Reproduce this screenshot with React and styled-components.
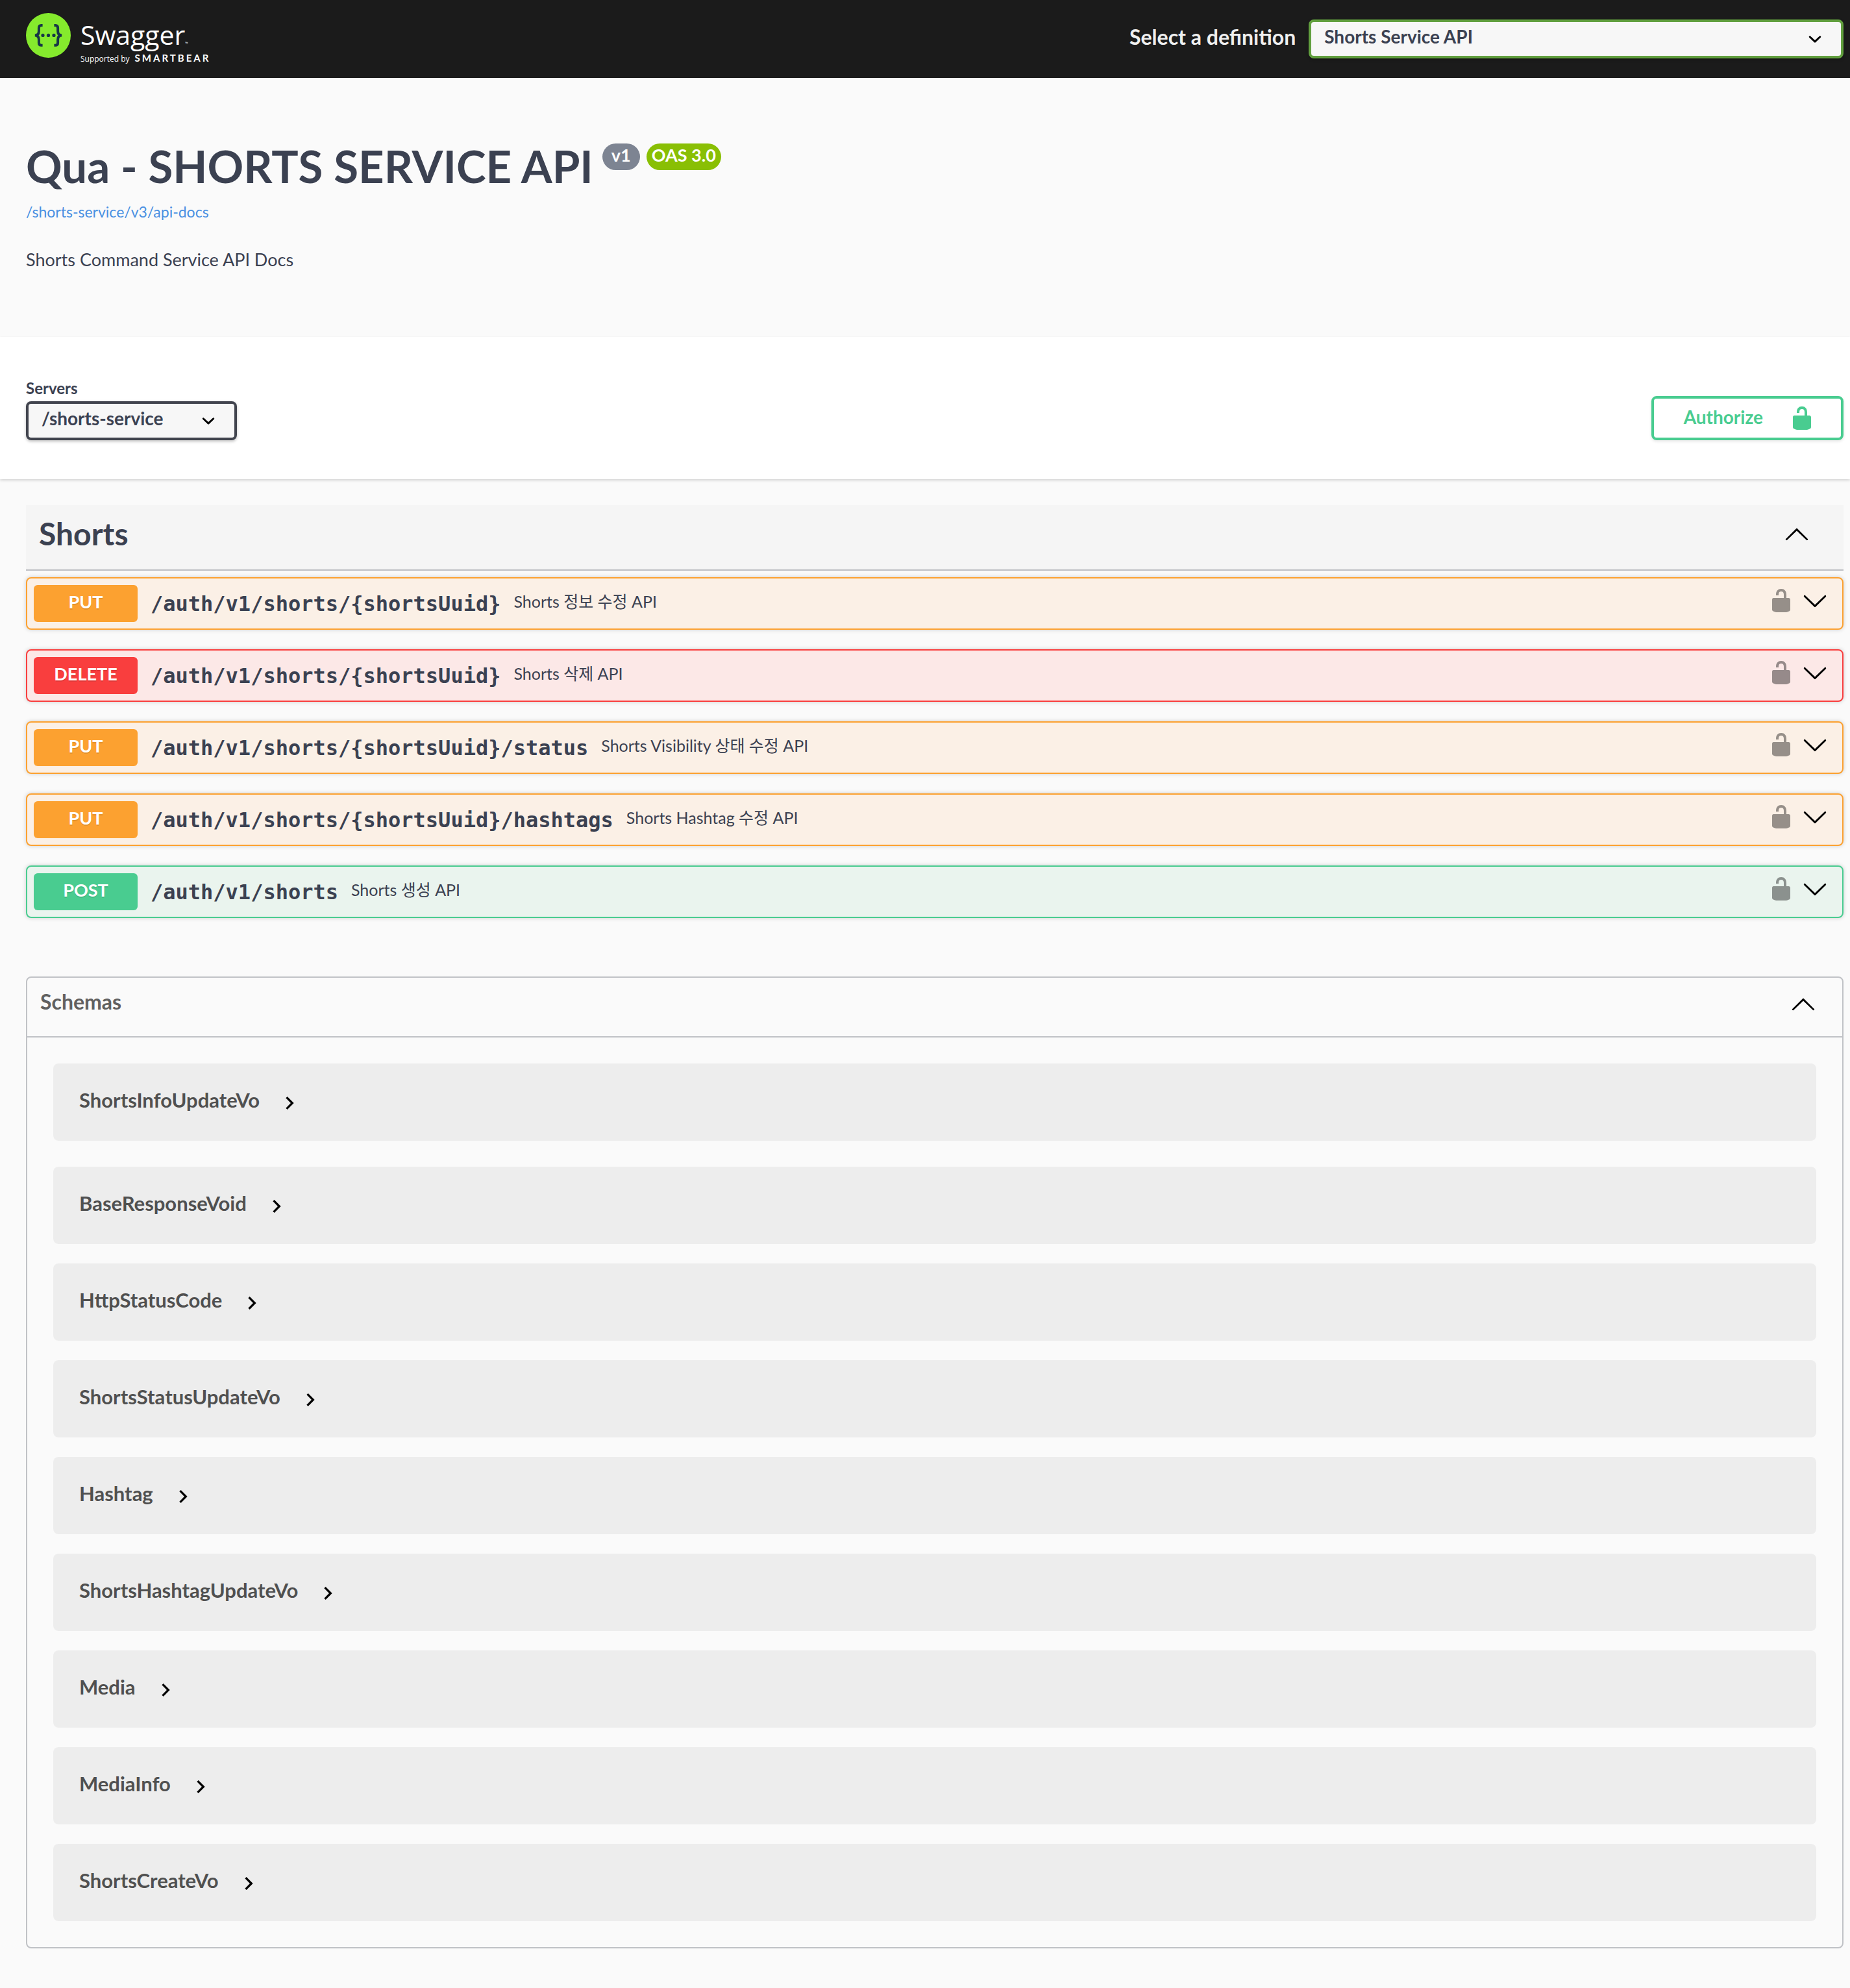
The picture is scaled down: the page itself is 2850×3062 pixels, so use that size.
import React from "react";
import styled, { createGlobalStyle } from "styled-components";

const sans = `Lato, "Noto Sans CJK KR", sans-serif`;
const mono = `"DejaVu Sans Mono", monospace`;
const ink = "#3b4151";
const line = "rgba(59, 65, 81, 0.3)";

const GlobalStyle = createGlobalStyle`
  *, *::before, *::after { box-sizing: border-box; }
  body {
    margin: 0;
    background: #fafafa;
    color: ${ink};
    font-family: ${sans};
  }
  h1, h2, p { margin: 0; }
  button, select { font-family: inherit; color: inherit; margin: 0; }
`;

/* ---------- icons ---------- */

const Svg = styled.svg`
  display: block;
  flex: none;
  width: 40px;
  height: 40px;
`;

const ChevronUp = () => (
  <Svg viewBox="0 0 20 20" aria-hidden="true">
    <path d="M17.418 14.908c.272.268.709.268.979 0s.271-.701 0-.969l-7.908-7.83c-.27-.268-.707-.268-.979 0l-7.908 7.83c-.27.268-.27.701 0 .969.271.268.709.268.979 0L10 7.767l7.418 7.141z" />
  </Svg>
);

const ChevronDown = () => (
  <Svg viewBox="0 0 20 20" aria-hidden="true">
    <path d="M17.418 6.109c.272-.268.709-.268.979 0s.271.701 0 .969l-7.908 7.83c-.27.268-.707.268-.979 0l-7.908-7.83c-.27-.268-.27-.701 0-.969.271-.268.709-.268.979 0L10 13.25l7.418-7.141z" />
  </Svg>
);

const ChevronRight = () => (
  <Svg viewBox="0 0 24 24" aria-hidden="true">
    <path d="M10 6L8.59 7.41 13.17 12l-4.58 4.59L10 18l6-6z" />
  </Svg>
);

const Unlocked = () => (
  <Svg viewBox="0 0 20 20" fill="currentColor" aria-hidden="true">
    <path d="M15.8 8H14V5.6C14 2.703 12.665 1 10 1 7.334 1 6 2.703 6 5.6V6h2v-.801C8 3.754 8.797 3 10 3c1.203 0 2 .754 2 2.199V8H4c-.553 0-1 .646-1 1.199V17c0 .549.428 1.139.951 1.307l1.197.387C5.672 18.861 6.55 19 7.1 19h5.8c.549 0 1.428-.139 1.951-.307l1.196-.387c.524-.167.953-.757.953-1.306V9.199C17 8.646 16.352 8 15.8 8z" />
  </Svg>
);

/* ---------- select ---------- */

const SelectBox = styled.div`
  position: relative;
  flex: ${(p) => (p.$fill ? "1" : "none")};
  width: ${(p) => (p.$fill ? "auto" : "325px")};
`;

const NativeSelect = styled.select`
  display: block;
  width: 100%;
  height: 60px;
  padding: 0 80px 8px 20px;
  appearance: none;
  border: 4px solid ${(p) => p.$border};
  border-radius: 8px;
  background: #f7f7f7;
  box-shadow: 0 2px 4px rgba(0, 0, 0, 0.25);
  color: ${ink};
  font-size: 28px;
  font-weight: 700;
`;

const SelectArrow = styled(Svg)`
  position: absolute;
  top: 10px;
  right: 24px;
  pointer-events: none;
`;

function Select({ id, border, fill, option }) {
  return (
    <SelectBox $fill={fill}>
      <NativeSelect id={id} $border={border}>
        <option>{option}</option>
      </NativeSelect>
      <SelectArrow viewBox="0 0 20 20" aria-hidden="true">
        <path d="M13.418 7.859a.695.695 0 01.978 0 .68.68 0 010 .969l-3.908 3.83a.697.697 0 01-.979 0l-3.908-3.83a.68.68 0 010-.969.695.695 0 01.978 0L10 11l3.418-3.141z" />
      </SelectArrow>
    </SelectBox>
  );
}

/* ---------- top bar ---------- */

const TopBar = styled.header`
  display: flex;
  justify-content: space-between;
  height: 120px;
  padding: 0 10px 0 40px;
  background: #1b1b1b;
`;

const LogoLink = styled.a`
  display: flex;
  gap: 15px;
  padding-top: 20px;
  color: #fff;
  text-decoration: none;
`;

const LogoMark = styled.svg`
  display: block;
  width: 69px;
  height: 69px;
`;

const LogoText = styled.div`
  padding-top: 9px;
  font-family: "Open Sans", sans-serif;
`;

const Wordmark = styled.div`
  display: flex;
  align-items: baseline;
  font-size: 41px;
  line-height: 48px;
`;

const TradeMark = styled.span`
  font-size: 6px;
  line-height: 8px;
`;

const Byline = styled.div`
  display: flex;
  align-items: baseline;
  gap: 8px;
  font-size: 12px;
  line-height: 24px;
`;

const Company = styled.span`
  font-family: ${sans};
  font-size: 15px;
  font-weight: 700;
  letter-spacing: 3px;
`;

const DefinitionPicker = styled.div`
  display: flex;
  align-items: center;
  gap: 20px;
  width: 100%;
  max-width: 1100px;
`;

const DefinitionLabel = styled.label`
  padding-bottom: 8px;
  color: #f0f0f0;
  font-size: 32px;
  font-weight: 700;
  white-space: nowrap;
`;

/* ---------- info ---------- */

const Info = styled.section`
  padding: 96px 10px 103px 40px;
`;

const TitleRow = styled.div`
  display: flex;
  align-items: flex-start;
  gap: 10px;
`;

const Title = styled.h1`
  padding-right: 4px;
  font-size: 69px;
  font-weight: 700;
  line-height: 80px;
`;

const Badge = styled.span`
  margin-top: 5px;
  padding: 0 ${(p) => (p.$wide ? "14px" : "8px")} 6px;
  border-radius: 21px;
  background: ${(p) => p.$color};
  color: #fff;
  font-size: 27px;
  font-weight: 700;
  line-height: 35px;
`;

const SpecLink = styled.a`
  display: block;
  width: fit-content;
  margin-top: 15px;
  color: #4990e2;
  font-size: 23px;
  line-height: 30px;
  text-decoration: none;
`;

const Description = styled.p`
  margin-top: 43px;
  font-size: 27px;
  line-height: 32px;
`;

/* ---------- servers ---------- */

const Scheme = styled.section`
  display: flex;
  align-items: flex-end;
  justify-content: space-between;
  padding: 65px 10px 60px 40px;
  background: #fff;
  box-shadow: 0 2px 4px rgba(0, 0, 0, 0.15);
`;

const ServerLabel = styled.label`
  display: block;
  margin-bottom: 6px;
  font-size: 24px;
  font-weight: 700;
  line-height: 28px;
`;

const AuthorizeButton = styled.button`
  display: flex;
  align-items: center;
  gap: 40px;
  height: 68px;
  padding: 0 40px 0 46px;
  border: 4px solid #49cc90;
  border-radius: 8px;
  background: transparent;
  box-shadow: 0 2px 4px rgba(0, 0, 0, 0.1);
  color: #49cc90;
  font-size: 28px;
  font-weight: 700;
`;

const AuthorizeText = styled.span`
  padding-bottom: 4px;
`;

/* ---------- operations ---------- */

const Content = styled.main`
  padding: 40px 10px 61px 40px;
`;

const IconButton = styled.button`
  display: block;
  padding: 0;
  border: 0;
  background: none;
  color: #000;
  opacity: ${(p) => (p.$faded ? 0.4 : 1)};
`;

const TagHeader = styled.div`
  display: flex;
  align-items: center;
  justify-content: space-between;
  height: 101px;
  margin-bottom: 10px;
  padding: 0 52px 12px 20px;
  border-bottom: 2px solid ${line};
  background: rgba(0, 0, 0, 0.02);
`;

const TagTitle = styled.h2`
  font-size: 48px;
  font-weight: 700;
`;

const Operations = styled.div`
  display: flex;
  flex-direction: column;
  gap: 30px;
`;

const Operation = styled.div`
  display: flex;
  align-items: center;
  gap: 20px;
  padding: 10px 22px 10px 10px;
  border: 2px solid ${(p) => p.$tone.strong};
  border-radius: 8px;
  background: ${(p) => p.$tone.soft};
  box-shadow: 0 0 6px rgba(0, 0, 0, 0.19);
`;

const Method = styled.span`
  width: 160px;
  padding: 9px 0 15px;
  border-radius: 6px;
  background: ${(p) => p.$tone.strong};
  color: #fff;
  font-size: 27px;
  font-weight: 700;
  line-height: 33px;
  text-align: center;
  text-shadow: 0 2px 0 rgba(0, 0, 0, 0.1);
`;

const Path = styled.a`
  color: ${ink};
  font-family: ${mono};
  font-size: 32px;
  font-weight: 700;
  text-decoration: none;
`;

const Summary = styled.span`
  flex: 1;
  padding-bottom: 8px;
  font-size: 25px;
  line-height: 36px;
`;

const Controls = styled.div`
  display: flex;
  gap: 12px;
  padding-bottom: 10px;
`;

/* ---------- schemas ---------- */

const Schemas = styled.section`
  margin-top: 90px;
  border: 2px solid ${line};
  border-radius: 8px;
`;

const SchemasHeader = styled.div`
  display: flex;
  align-items: center;
  justify-content: space-between;
  height: 92px;
  padding: 0 40px 10px 20px;
  border-bottom: 2px solid ${line};
`;

const SchemasTitle = styled.h2`
  padding-bottom: 8px;
  color: #606060;
  font-size: 32px;
  font-weight: 700;
`;

const SchemaList = styled.div`
  display: flex;
  flex-direction: column;
  gap: 30px;
  padding: 40px;
`;

const SchemaCard = styled.div`
  padding: 41px 40px 38px;
  border-radius: 8px;
  background: rgba(0, 0, 0, 0.05);

  &:first-child {
    margin-bottom: 10px;
  }
`;

const SchemaToggle = styled.button`
  display: flex;
  align-items: center;
  gap: 26px;
  height: 40px;
  padding: 0;
  border: 0;
  background: none;
  font-size: 31px;
  font-weight: 700;
`;

const SchemaName = styled.span`
  padding-bottom: 10px;
  color: #505050;
`;

const tones = {
  PUT: { strong: "#fca130", soft: "#fbf0e6" },
  DELETE: { strong: "#f93e3e", soft: "#fce8e7" },
  POST: { strong: "#49cc90", soft: "#eaf4ee" },
};

const operations = [
  ["PUT", "/auth/v1/shorts/{shortsUuid}", "Shorts 정보 수정 API"],
  ["DELETE", "/auth/v1/shorts/{shortsUuid}", "Shorts 삭제 API"],
  ["PUT", "/auth/v1/shorts/{shortsUuid}/status", "Shorts Visibility 상태 수정 API"],
  ["PUT", "/auth/v1/shorts/{shortsUuid}/hashtags", "Shorts Hashtag 수정 API"],
  ["POST", "/auth/v1/shorts", "Shorts 생성 API"],
];

const schemas = [
  "ShortsInfoUpdateVo",
  "BaseResponseVoid",
  "HttpStatusCode",
  "ShortsStatusUpdateVo",
  "Hashtag",
  "ShortsHashtagUpdateVo",
  "Media",
  "MediaInfo",
  "ShortsCreateVo",
];

export default function App() {
  return (
    <>
      <GlobalStyle />
      <TopBar>
        <LogoLink href="#">
          <LogoMark viewBox="0 0 69 69" aria-hidden="true">
            <circle cx="34.5" cy="34.5" r="34.5" fill="#85ea2d" />
            <g fill="none" stroke="#173647" strokeWidth="4">
              <path d="M25.6 19H23.6C20.6 19 19.9 20.8 19.9 23V28C19.9 32 18.5 34.4 13.8 34.4C18.5 34.4 19.9 37 19.9 41V46C19.9 48.2 20.6 49.8 23.6 49.8H25.6" />
              <path d="M43.4 19H45.4C48.4 19 49.1 20.8 49.1 23V28C49.1 32 50.5 34.4 55.2 34.4C50.5 34.4 49.1 37 49.1 41V46C49.1 48.2 48.4 49.8 45.4 49.8H43.4" />
            </g>
            <g fill="#173647">
              <circle cx="26" cy="34.4" r="2.6" />
              <circle cx="34.5" cy="34.4" r="2.6" />
              <circle cx="43" cy="34.4" r="2.6" />
            </g>
          </LogoMark>
          <LogoText>
            <Wordmark>
              Swagger<TradeMark>™</TradeMark>
            </Wordmark>
            <Byline>
              Supported by <Company>SMARTBEAR</Company>
            </Byline>
          </LogoText>
        </LogoLink>
        <DefinitionPicker>
          <DefinitionLabel htmlFor="definition">Select a definition</DefinitionLabel>
          <Select id="definition" border="#62a03f" fill option="Shorts Service API" />
        </DefinitionPicker>
      </TopBar>

      <Info>
        <TitleRow>
          <Title>Qua - SHORTS SERVICE API</Title>
          <Badge $color="#7d8492" $wide>v1</Badge>
          <Badge $color="#89bf04">OAS 3.0</Badge>
        </TitleRow>
        <SpecLink href="#">/shorts-service/v3/api-docs</SpecLink>
        <Description>Shorts Command Service API Docs</Description>
      </Info>

      <Scheme>
        <div>
          <ServerLabel htmlFor="servers">Servers</ServerLabel>
          <Select id="servers" border="#41444e" option="/shorts-service" />
        </div>
        <AuthorizeButton type="button">
          <AuthorizeText>Authorize</AuthorizeText>
          <Unlocked />
        </AuthorizeButton>
      </Scheme>

      <Content>
        <TagHeader>
          <TagTitle>Shorts</TagTitle>
          <IconButton type="button" aria-label="Collapse operations">
            <ChevronUp />
          </IconButton>
        </TagHeader>
        <Operations>
          {operations.map(([method, path, summary]) => (
            <Operation key={method + path} $tone={tones[method]}>
              <Method $tone={tones[method]}>{method}</Method>
              <Path href="#">{path}</Path>
              <Summary>{summary}</Summary>
              <Controls>
                <IconButton type="button" $faded aria-label="Authorization">
                  <Unlocked />
                </IconButton>
                <IconButton type="button" aria-label="Expand operation">
                  <ChevronDown />
                </IconButton>
              </Controls>
            </Operation>
          ))}
        </Operations>

        <Schemas>
          <SchemasHeader>
            <SchemasTitle>Schemas</SchemasTitle>
            <IconButton type="button" aria-label="Collapse schemas">
              <ChevronUp />
            </IconButton>
          </SchemasHeader>
          <SchemaList>
            {schemas.map((name) => (
              <SchemaCard key={name}>
                <SchemaToggle type="button">
                  <SchemaName>{name}</SchemaName>
                  <ChevronRight />
                </SchemaToggle>
              </SchemaCard>
            ))}
          </SchemaList>
        </Schemas>
      </Content>
    </>
  );
}
